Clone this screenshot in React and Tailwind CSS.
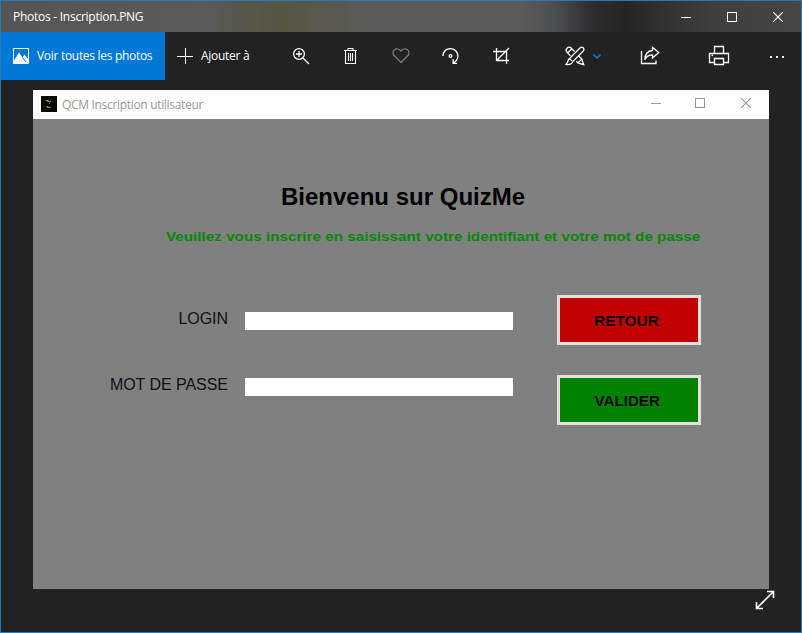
import React from "react";

function Icon({ className = "", size = 20, children }) {
  return (
    <svg
      className={"shrink-0 " + className}
      width={size}
      height={size}
      viewBox={`0 0 ${size} ${size}`}
      fill="none"
      stroke="currentColor"
      strokeWidth="1.3"
    >
      {children}
    </svg>
  );
}

function Tool({ label, className, children }) {
  return (
    <button aria-label={label} className={"flex h-12 shrink-0 items-center justify-center " + className}>
      {children}
    </button>
  );
}

function WindowControls({ className, minimizeClass = "mr-9" }) {
  return (
    <div className={"flex " + className}>
      <svg width="10" height="10" className={minimizeClass} stroke="currentColor" shapeRendering="crispEdges">
        <path d="M0 5.5H10" />
      </svg>
      <svg width="10" height="10" className="mr-9" fill="none" stroke="currentColor" shapeRendering="crispEdges">
        <path d="M.5 .5h9v9h-9z" />
      </svg>
      <svg width="10" height="10" stroke="currentColor" strokeWidth="1.1">
        <path d="M0 0l10 10M10 0L0 10" />
      </svg>
    </div>
  );
}

function TitleBar() {
  return (
    <header className="flex h-[31px] shrink-0 items-center bg-[linear-gradient(90deg,#555556_0,#5a5a5a_205px,#56564b_245px,#555543_285px,#58584f_325px,#5b5b5b_370px,#5b5b5b_520px,#4c4d50_555px,#2d2d2f_590px,#252525_625px,#303030_660px,#3f3e3f_710px,#474647_100%)] pl-3 pr-[18px] text-white">
      <span className="text-[12px] tracking-[-0.26px]">Photos - Inscription.PNG</span>
      <WindowControls className="ml-auto" />
    </header>
  );
}

function Toolbar() {
  return (
    <nav className="flex h-12 shrink-0 items-center text-[12px] text-white">
      <button className="flex h-12 w-[164px] shrink-0 items-center bg-[#0078d7] pl-3">
        <svg width="16" height="16" viewBox="0 0 16 16" className="shrink-0">
          <path d="M.5.5h15v15H.5z" fill="none" stroke="white" />
          <path d="M1 12.5L6 4.5l3.5 5L11.5 6.5l3.5 4.5v4H1z" fill="white" />
          <path d="M9.5 9.5l3.5 4.5" stroke="#0078d7" />
        </svg>
        <span className="ml-2 whitespace-nowrap tracking-[-0.3px]">Voir toutes les photos</span>
      </button>
      <button className="flex h-12 w-[110px] shrink-0 items-center pl-3">
        <svg width="16" height="16" stroke="white" shapeRendering="crispEdges" className="shrink-0">
          <path d="M0 8.5h16M8.5 0v16" />
        </svg>
        <span className="ml-2 whitespace-nowrap tracking-[-0.28px]">Ajouter à</span>
      </button>
      <Tool label="Zoom" className="w-[50px] pl-px">
        <Icon>
          <circle cx="8" cy="8" r="5.4" />
          <path d="M12 12l6 6M5 8h6M8 5v6" />
        </Icon>
      </Tool>
      <Tool label="Supprimer" className="w-[50px]">
        <Icon>
          <path d="M4 4.5h13M8 4.5v-2h5v2M5.5 4.5v13h10v-13M8.5 7v8M10.5 7v8M12.5 7v8" strokeWidth="1.1" />
        </Icon>
      </Tool>
      <Tool label="Favori" className="w-[50px] text-[#777777]">
        <Icon>
          <path d="M11 16.5L4.3 9.8C2.3 7.8 2.8 4.9 4.5 3.8 6.7 2.3 9.5 3 11 5.2c1.5-2.2 4.3-2.9 6.5-1.4 1.7 1.1 2.2 4 .2 6z" />
        </Icon>
      </Tool>
      <Tool label="Pivoter" className="w-[50px]">
        <Icon>
          <path d="M2.9 10c0-4.3 3.2-7.3 7.4-7.3s7.6 3.2 7.6 7.3c0 3.3-1.9 5.6-4.8 7.1M13.1 13v4.4h3.9" />
          <circle cx="10.5" cy="10" r="1.4" />
        </Icon>
      </Tool>
      <Tool label="Rogner" className="w-[50px] pl-px">
        <Icon>
          <path d="M2 5.5h13.5V18M5.5 2v12.5H18M5.5 14.5L18 2" />
        </Icon>
      </Tool>
      <Tool label="Modifier" className="ml-[38px] w-[38px]">
        <Icon size={22}>
          <path d="M3 3.2c1.4-1.4 3.1-1.2 4.3 0L10.5 6.5M3 3.2c-1 1.1-1 3 .1 4.2l3.4 3.5M3.7 7.9L7.8 3.8M12.3 16.2l1.6 1.7 5.8 1.8-1.9-5.6-3.2-3.3M13.9 17.9l3.9-3.8" />
          <path d="M19.3 2.9c-1.1-1-2.6-.7-3.6.3L5.5 13.5l3.3 3.2L19 6.3c1-1 1.2-2.5.3-3.4zM5.5 13.5c-2 1-1 4-3.4 5.8 3 .7 6.1 0 6.7-2.6" />
        </Icon>
        <svg width="8" height="5" className="ml-[7px] shrink-0" fill="none" stroke="#0078d7" strokeWidth="1.6">
          <path d="M.5 .5L4 4 7.5 .5" />
        </svg>
      </Tool>
      <Tool label="Partager" className="ml-[38px] w-[22px]">
        <Icon size={22}>
          <path d="M2.5 6v12.5h14.5v-3" />
          <path d="M13.5 2.2l6.2 5.4-6.2 5.4V9.8c-3.7 0-6 1.4-7.7 5 .2-5.2 2.9-8.9 7.7-9.3z" />
        </Icon>
      </Tool>
      <Tool label="Imprimer" className="ml-[47px] w-[22px]">
        <Icon size={22}>
          <path d="M6.5 8.5v-7h9v7M6.5 17.5h-5v-9h19v9h-5M6.5 13.5h9v6h-9zM3.5 10.5H5" />
        </Icon>
      </Tool>
      <Tool label="Plus" className="ml-10 w-[14px] pt-0.5">
        <svg width="14" height="2" fill="white" shapeRendering="crispEdges">
          <path d="M0 0h2v2H0zM6 0h2v2H6zM12 0h2v2h-2z" />
        </svg>
      </Tool>
    </nav>
  );
}

function AppTitleBar() {
  return (
    <div className="flex h-[29px] shrink-0 items-center bg-white pl-2 pr-[18px] text-[#999999]">
      <svg width="16" height="16" className="mb-[2px]">
        <path d="M0 0h16v16H0z" fill="#080805" />
        <path d="M4.5 4.5h3M6 5.5h4M8 7.5h1M5.5 10.5h2M6 11.5h4" stroke="#a9a184" strokeWidth=".8" />
      </svg>
      <span className="ml-[5px] text-[12px] tracking-[-0.32px]">QCM Inscription utilisateur</span>
      <WindowControls className="mb-[3px] ml-auto" minimizeClass="mr-[34px]" />
    </div>
  );
}

function Field({ label }) {
  return (
    <label className="flex h-[18px] items-center">
      <span className="flex w-[195px] justify-end whitespace-nowrap text-[16px] leading-[18px] text-[#101010]">
        <span className="-mt-1 tracking-[-0.04px]">{label}</span>
      </span>
      <input className="ml-[17px] h-[18px] w-[268px] bg-white outline-none" />
    </label>
  );
}

function ActionButton({ className, children }) {
  return (
    <button className={"flex h-[50px] w-[144px] items-center justify-center border-[3px] border-[#e2dfdc] text-[14px] font-bold text-[#080808] " + className}>
      {children}
    </button>
  );
}

function Form() {
  return (
    <main className="flex grow flex-col bg-[#808080] font-['Liberation_Sans',Arial,sans-serif]">
      <h1 className="ml-[248px] mt-[64px] w-fit whitespace-nowrap text-[24px] font-bold leading-[28px] text-black">
        Bienvenu sur QuizMe
      </h1>
      <p className="ml-[133px] mt-[17px] w-fit origin-left scale-x-[1.172] whitespace-nowrap text-[13px] font-bold leading-[18px] text-[#088808]">
        Veuillez vous inscrire en saisissant votre identifiant et votre mot de passe
      </p>
      <div className="mt-[49px] flex">
        <div className="flex flex-col gap-12 pt-[17px]">
          <Field label="LOGIN" />
          <Field label="MOT DE PASSE" />
        </div>
        <div className="ml-[44px] flex flex-col gap-[30px]">
          <ActionButton className="bg-[#c00000]">
            <span className="-ml-[6px] mt-0.5 scale-x-[1.1]">RETOUR</span>
          </ActionButton>
          <ActionButton className="bg-[#008000]">
            <span className="-ml-[3px] mt-0.5 scale-x-[1.08]">VALIDER</span>
          </ActionButton>
        </div>
      </div>
    </main>
  );
}

export default function App() {
  return (
    <div className="flex h-[633px] w-[802px] flex-col overflow-hidden border border-[#2879b5] bg-[#222222] font-['Open_Sans','Noto_Sans',sans-serif]">
      <TitleBar />
      <Toolbar />
      <section className="ml-8 mt-[10px] flex h-[499px] w-[736px] shrink-0 flex-col">
        <AppTitleBar />
        <Form />
      </section>
      <button aria-label="Plein écran" className="ml-auto mr-[26px] mt-px text-white">
        <svg width="20" height="20" fill="none" stroke="currentColor" strokeWidth="1.6">
          <path d="M1.5 18.5l17-17M12 1.5h6.5V8M1.5 12v6.5H8" />
        </svg>
      </button>
    </div>
  );
}
